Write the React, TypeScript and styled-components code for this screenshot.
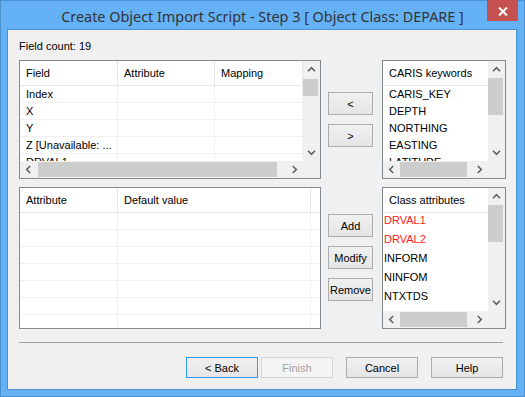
import React from "react";
import styled, { createGlobalStyle } from "styled-components";

const GlobalStyle = createGlobalStyle`
  html, body {
    margin: 0;
    padding: 0;
  }
  body {
    font-family: "Liberation Sans", Arial, sans-serif;
    font-size: 11px;
    color: #000;
  }
`;

type Column = { title: string; width: number };

const fieldColumns: Column[] = [
  { title: "Field", width: 98 },
  { title: "Attribute", width: 97 },
  { title: "Mapping", width: 88 },
];

const fieldRows = [
  ["Index", "", ""],
  ["X", "", ""],
  ["Y", "", ""],
  ["Z [Unavailable: ...", "", ""],
  ["DRVAL1", "", ""],
];

const defaultColumns: Column[] = [
  { title: "Attribute", width: 98 },
  { title: "Default value", width: 193 },
];

const keywords = ["CARIS_KEY", "DEPTH", "NORTHING", "EASTING", "LATITUDE"];

const classAttributes = [
  { name: "DRVAL1", mandatory: true },
  { name: "DRVAL2", mandatory: true },
  { name: "INFORM", mandatory: false },
  { name: "NINFOM", mandatory: false },
  { name: "NTXTDS", mandatory: false },
  { name: "SCAMAX", mandatory: false },
];

const Window = styled.div`
  width: 525px;
  height: 397px;
  box-sizing: border-box;
  background: #64b1f5;
  border: 1px solid #4b90cf;
  display: flex;
  flex-direction: column;
`;

const TitleBar = styled.div`
  height: 28px;
  display: grid;
  grid-template-columns: 1fr auto 1fr;
`;

const Title = styled.div`
  grid-column: 2;
  font-family: "Noto Sans", "Open Sans", sans-serif;
  font-size: 14.4px;
  line-height: 28px;
  padding-top: 2px;
  color: #333;
  white-space: nowrap;
`;

const CloseButton = styled.div`
  grid-column: 3;
  justify-self: end;
  margin: -1px 6px 0 0;
  width: 31px;
  height: 21px;
  background: #c75050;
  display: flex;
  align-items: center;
  justify-content: center;
  padding-top: 1px;
  box-sizing: border-box;
`;

const Client = styled.div`
  flex: 1;
  margin: 0 7px 6px 6px;
  border: 1px solid #4b90cf;
  background: #f0f0f0;
  padding: 10px 0 0 11px;
  display: flex;
  flex-direction: column;
`;

const FieldCount = styled.div`
  line-height: 13px;
`;

const Panels = styled.div`
  margin-top: 7px;
  display: grid;
  grid-template-columns: 302px 61px 124px;
  grid-template-rows: 119px 142px;
  row-gap: 8px;
`;

const Frame = styled.div<{ $scroll?: boolean }>`
  border: 1px solid #828790;
  background: #fff;
  display: grid;
  grid-template-columns: ${(p) => (p.$scroll ? "minmax(0, 1fr) 17px" : "minmax(0, 1fr)")};
  grid-template-rows: ${(p) => (p.$scroll ? "minmax(0, 1fr) 17px" : "minmax(0, 1fr)")};
  overflow: hidden;
`;

const Viewport = styled.div`
  overflow: hidden;
  min-width: 0;
  min-height: 0;
`;

const Header = styled.div`
  display: flex;
  height: 25px;
  box-sizing: border-box;
  border-bottom: 1px solid #e3e9f3;
`;

const HeaderCell = styled.div<{ $w?: number }>`
  ${(p) => (p.$w ? `width: ${p.$w}px;` : "flex: 1;")}
  flex-shrink: 0;
  box-sizing: border-box;
  padding-left: 6px;
  line-height: 24px;
  white-space: nowrap;
  border-right: ${(p) => (p.$w ? "1px solid #e5e5e5" : "none")};
`;

const GridRow = styled.div`
  display: flex;
  height: 17px;
  box-sizing: border-box;
  border-bottom: 1px solid #f0f0f0;
`;

const GridCell = styled.div<{ $w: number }>`
  width: ${(p) => p.$w}px;
  flex-shrink: 0;
  box-sizing: border-box;
  padding: 2px 0 0 6px;
  line-height: 13px;
  white-space: nowrap;
  overflow: hidden;
  border-right: 1px solid #f0f0f0;
`;

const ListItem = styled.div<{ $h: number; $pad: number }>`
  height: ${(p) => p.$h}px;
  padding-left: ${(p) => p.$pad}px;
  line-height: ${(p) => p.$h}px;
  white-space: nowrap;
`;

const AttrItem = styled.div<{ $red?: boolean }>`
  height: 19px;
  box-sizing: border-box;
  padding: 1px 0 0 1px;
  line-height: 13px;
  white-space: nowrap;
  color: ${(p) => (p.$red ? "#ff1a1a" : "#000")};
`;

const VBar = styled.div`
  background: #f0f0f0;
  display: flex;
  flex-direction: column;
  min-height: 0;
`;

const HBar = styled.div`
  background: #f0f0f0;
  display: flex;
  min-width: 0;
`;

const Arrow = styled.div`
  width: 17px;
  height: 17px;
  flex-shrink: 0;
  display: flex;
  align-items: center;
  justify-content: center;
`;

const Track = styled.div`
  flex: 1;
  display: flex;
  min-width: 0;
  min-height: 0;
`;

const VThumb = styled.div<{ $at: number; $size: number }>`
  margin: ${(p) => p.$at}px 1px 0 0;
  width: 15px;
  height: ${(p) => p.$size}px;
  background: #cdcdcd;
`;

const HThumb = styled.div<{ $at: number; $size: number }>`
  margin: 1px 0 0 ${(p) => p.$at}px;
  height: 15px;
  width: ${(p) => p.$size}px;
  background: #cdcdcd;
`;

const Corner = styled.div`
  background: #f0f0f0;
`;

const SideButtons = styled.div<{ $top: number }>`
  display: flex;
  flex-direction: column;
  gap: 9px;
  padding: ${(p) => p.$top}px 0 0 7px;
`;

const PushButton = styled.div<{ $w: number; $h: number; $focus?: boolean; $disabled?: boolean }>`
  width: ${(p) => p.$w}px;
  height: ${(p) => p.$h}px;
  box-sizing: border-box;
  border: 1px solid ${(p) => (p.$focus ? "#3399ff" : p.$disabled ? "#d5d5d5" : "#acacac")};
  background: ${(p) => (p.$disabled ? "#f4f4f4" : "linear-gradient(#f0f0f0, #e5e5e5)")};
  color: ${(p) => (p.$disabled ? "#a0a0a0" : "#000")};
  display: flex;
  align-items: center;
  justify-content: center;
  white-space: nowrap;
`;

const Separator = styled.div`
  height: 1px;
  background: #a0a0a0;
  margin: 13px 13px 0 0;
`;

const Footer = styled.div`
  margin-top: 14px;
  padding-right: 13px;
  display: flex;
  justify-content: flex-end;
  gap: 13px;
`;

const BackGroup = styled.div`
  display: flex;
  gap: 3px;
`;

const Chevron = ({ dir }: { dir: "up" | "down" | "left" | "right" }) => {
  const rot = { up: 0, right: 90, down: 180, left: 270 }[dir];
  return (
    <svg width="9" height="9" viewBox="0 0 9 9">
      <path
        d="M1 6.2 L4.5 2.7 L8 6.2"
        fill="none"
        stroke="#606060"
        strokeWidth="1.6"
        transform={`rotate(${rot} 4.5 4.5)`}
      />
    </svg>
  );
};

const VScroll = ({ at, size }: { at: number; size: number }) => (
  <VBar>
    <Arrow>
      <Chevron dir="up" />
    </Arrow>
    <Track>
      <VThumb $at={at} $size={size} />
    </Track>
    <Arrow>
      <Chevron dir="down" />
    </Arrow>
  </VBar>
);

const HScroll = ({ at, size }: { at: number; size: number }) => (
  <HBar>
    <Arrow>
      <Chevron dir="left" />
    </Arrow>
    <Track>
      <HThumb $at={at} $size={size} />
    </Track>
    <Arrow>
      <Chevron dir="right" />
    </Arrow>
  </HBar>
);

const FieldList = () => (
  <Frame $scroll>
    <Viewport>
      <Header>
        {fieldColumns.map((c) => (
          <HeaderCell key={c.title} $w={c.width}>
            {c.title}
          </HeaderCell>
        ))}
      </Header>
      {fieldRows.map((r, i) => (
        <GridRow key={i}>
          {r.map((v, j) => (
            <GridCell key={j} $w={fieldColumns[j].width}>
              {v}
            </GridCell>
          ))}
        </GridRow>
      ))}
    </Viewport>
    <VScroll at={1} size={17} />
    <HScroll at={1} size={239} />
    <Corner />
  </Frame>
);

const DefaultList = () => (
  <Frame>
    <Viewport>
      <Header>
        {defaultColumns.map((c) => (
          <HeaderCell key={c.title} $w={c.width}>
            {c.title}
          </HeaderCell>
        ))}
        <HeaderCell />
      </Header>
      {Array.from({ length: 7 }).map((_, i) => (
        <GridRow key={i}>
          {defaultColumns.map((c) => (
            <GridCell key={c.title} $w={c.width} />
          ))}
        </GridRow>
      ))}
    </Viewport>
  </Frame>
);

const KeywordList = () => (
  <Frame $scroll>
    <Viewport>
      <Header>
        <HeaderCell>CARIS keywords</HeaderCell>
      </Header>
      {keywords.map((k) => (
        <ListItem key={k} $h={17} $pad={6}>
          {k}
        </ListItem>
      ))}
    </Viewport>
    <VScroll at={0} size={37} />
    <HScroll at={0} size={67} />
    <Corner />
  </Frame>
);

const ClassAttributeList = () => (
  <Frame $scroll>
    <Viewport>
      <Header>
        <HeaderCell>Class attributes</HeaderCell>
      </Header>
      {classAttributes.map((a) => (
        <AttrItem key={a.name} $red={a.mandatory}>
          {a.name}
        </AttrItem>
      ))}
    </Viewport>
    <VScroll at={0} size={37} />
    <HScroll at={0} size={67} />
    <Corner />
  </Frame>
);

export default function App() {
  return (
    <>
      <GlobalStyle />
      <Window>
        <TitleBar>
          <Title>Create Object Import Script - Step 3 [ Object Class: DEPARE ]</Title>
          <CloseButton>
            <svg width="10" height="9" viewBox="0 0 10 9">
              <path d="M1 0.5 L9 8.5 M9 0.5 L1 8.5" stroke="#fff" strokeWidth="2" />
            </svg>
          </CloseButton>
        </TitleBar>
        <Client>
          <FieldCount>Field count: 19</FieldCount>
          <Panels>
            <FieldList />
            <SideButtons $top={32}>
              <PushButton $w={45} $h={23}>&lt;</PushButton>
              <PushButton $w={45} $h={23}>&gt;</PushButton>
            </SideButtons>
            <KeywordList />
            <DefaultList />
            <SideButtons $top={27}>
              <PushButton $w={45} $h={23}>Add</PushButton>
              <PushButton $w={45} $h={23}>Modify</PushButton>
              <PushButton $w={45} $h={23}>Remove</PushButton>
            </SideButtons>
            <ClassAttributeList />
          </Panels>
          <Separator />
          <Footer>
            <BackGroup>
              <PushButton $w={72} $h={21} $focus>
                &lt; Back
              </PushButton>
              <PushButton $w={72} $h={21} $disabled>
                Finish
              </PushButton>
            </BackGroup>
            <PushButton $w={72} $h={21}>Cancel</PushButton>
            <PushButton $w={72} $h={21}>Help</PushButton>
          </Footer>
        </Client>
      </Window>
    </>
  );
}
